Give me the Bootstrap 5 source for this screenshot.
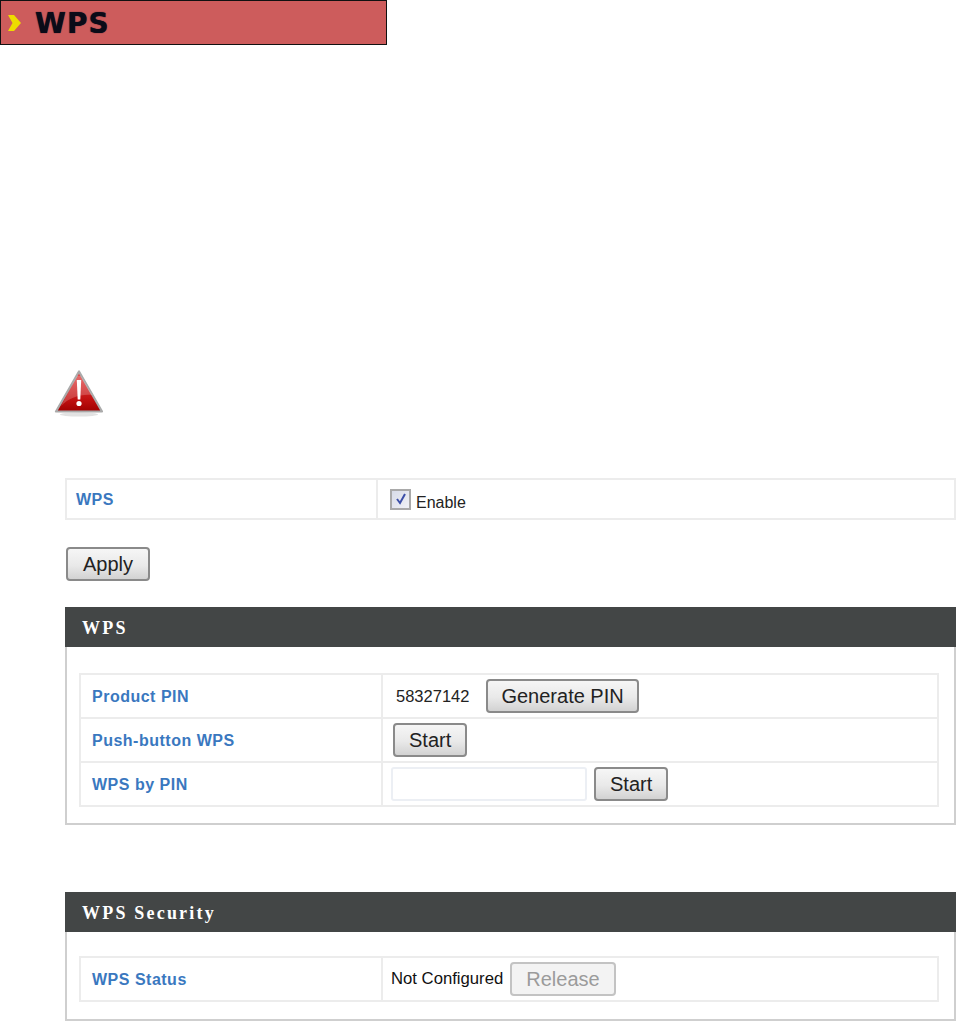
<!DOCTYPE html>
<html lang="en">
<head>
<meta charset="utf-8">
<title>WPS</title>
<link href="https://cdn.jsdelivr.net/npm/bootstrap@5.3.0/dist/css/bootstrap.min.css" rel="stylesheet">
<style>
body{background:#fff;font-family:"Liberation Sans",Arial,sans-serif;color:#111;margin:0}
.pg-banner{width:387px;height:45px;background:#cd5c5c;border:1px solid #111;padding-left:6px;gap:13px}
.pg-banner b{font-family:"DejaVu Sans",sans-serif;font-size:28px;letter-spacing:1px;line-height:1;color:#0b0b18;font-weight:700;margin-top:3px;text-shadow:0 0 1px #0b0b18}
.warn-wrap{margin:325px 0 0 54px;height:48px}
.content{margin:60px 8px 0 65px}
.set-tbl{width:100%;table-layout:fixed;border-collapse:collapse;margin:0}
.set-tbl td{border:2px solid #ececec;padding:0;vertical-align:middle;font-size:14px;line-height:1}
.tbl-top td{height:40px}
.tbl-top td:first-child{width:311px;padding-left:9px}
.tbl-top .lbl{display:inline-block;padding-top:1px}
.tbl-inner td:first-child{width:302px;padding-left:11px}
.tbl-inner .lbl{display:inline-block;padding-top:2px}
.tbl-inner tr{height:44px}
.lbl{color:#3a78bf;font-weight:700;font-size:16px;letter-spacing:.5px}
.en-box{width:21px;height:21px;border:2px solid #a9a9a9;background:linear-gradient(135deg,#d8dce8,#f0f1f6);margin:0 5px 0 12px}
.en-txt{font-size:16px;color:#222;margin-top:7px}
.old-btn{font-family:"Liberation Sans",Arial,sans-serif;font-size:20px;line-height:1;color:#222;height:34px;padding:0 14px;border:2px solid #8a8a8a;border-radius:4px;background:linear-gradient(#f6f6f6,#e9e9e9 55%,#d2d2d2)}
.old-btn.off{color:#9b9b9b;border-color:#c3c3c3;background:#f3f3f3}
.old-btn.gen{padding:0 13px}
.btn-apply{width:84px;padding:0;margin:27px 0 0 1px;display:block;font-size:20px}
.pnl{border:2px solid #cfcfcf;border-top:0}
.pnl-head{background:#434646;color:#fff;height:40px;padding-left:17px;font-family:"Liberation Serif",serif;font-weight:700;font-size:18px;letter-spacing:2.2px;line-height:42px}
.pnl-a{margin-top:26px}
.pnl-a .pnl-body{padding:26px 15px 16px 12px}
.pnl-b{margin-top:67px}
.pnl-b .pnl-body{padding:24px 15px 17px 12px}
.pin-val{font-size:16.5px;color:#222;margin:1px 17px 0 13px}
.pad-cell{padding-left:10px!important}
.pad-cell-b{padding-left:8px!important}
.pin-box{width:196px;height:34px;border:2px solid #eceff4;border-radius:3px;background:#fff;margin-right:7px}
.status-txt{font-size:16.7px;color:#111;margin:1px 7px 0 8px}
</style>
</head>
<body>
<div class="pg-banner d-flex align-items-center">
  <svg width="15" height="18" viewBox="0 0 15 18"><path d="M1 1h6l7 8-7 8H1l4.500-8z" fill="#eedc00"/></svg>
  <b>WPS</b>
</div>
<div class="warn-wrap">
  <svg width="50" height="48" viewBox="0 0 50 48">
    <defs><linearGradient id="wg" x1="0" y1="0" x2="0" y2="1"><stop offset="0" stop-color="#e85050"/><stop offset=".7" stop-color="#c01010"/><stop offset="1" stop-color="#a00000"/></linearGradient></defs>
    <ellipse cx="25" cy="44.500" rx="19" ry="2" fill="#e2e2e2"/>
    <path d="M25 1.500 2 41.500h46z" fill="url(#wg)" stroke="#aaa" stroke-width="2.200" stroke-linejoin="round"/>
    <path d="M7 36c9-9 20-12 31-11L27 6h-4z" fill="#fff" opacity=".2"/>
    <path d="M22.800 10h4.400l-.9 19.500h-2.600z" fill="#fff"/>
    <circle cx="25" cy="33.500" r="2.600" fill="#fff"/>
  </svg>
</div>
<div class="content">
  <table class="set-tbl tbl-top">
    <tr><td><span class="lbl">WPS</span></td><td><div class="d-flex align-items-center"><span class="en-box d-flex align-items-center justify-content-center"><svg width="14" height="14" viewBox="0 0 14 14"><path d="M3 7l3 4 5-9" fill="none" stroke="#3c4fa8" stroke-width="2"/></svg></span><span class="en-txt">Enable</span></div></td></tr>
  </table>
  <button class="old-btn btn-apply" type="button">Apply</button>
  <section class="pnl-a">
    <div class="pnl-head">WPS</div>
    <div class="pnl pnl-body">
      <table class="set-tbl tbl-inner">
        <tr><td><span class="lbl">Product PIN</span></td><td><div class="d-flex align-items-center"><span class="pin-val">58327142</span><button class="old-btn gen" type="button">Generate PIN</button></div></td></tr>
        <tr><td><span class="lbl">Push-button WPS</span></td><td class="pad-cell"><button class="old-btn" type="button">Start</button></td></tr>
        <tr><td><span class="lbl">WPS by PIN</span></td><td class="pad-cell-b"><div class="d-flex align-items-center"><span class="pin-box"></span><button class="old-btn" type="button">Start</button></div></td></tr>
      </table>
    </div>
  </section>
  <section class="pnl-b">
    <div class="pnl-head">WPS Security</div>
    <div class="pnl pnl-body">
      <table class="set-tbl tbl-inner">
        <tr><td><span class="lbl">WPS Status</span></td><td><div class="d-flex align-items-center"><span class="status-txt">Not Configured</span><button class="old-btn off" type="button" disabled>Release</button></div></td></tr>
      </table>
    </div>
  </section>
</div>
<script src="https://cdn.jsdelivr.net/npm/bootstrap@5.3.0/dist/js/bootstrap.bundle.min.js"></script>
</body>
</html>
